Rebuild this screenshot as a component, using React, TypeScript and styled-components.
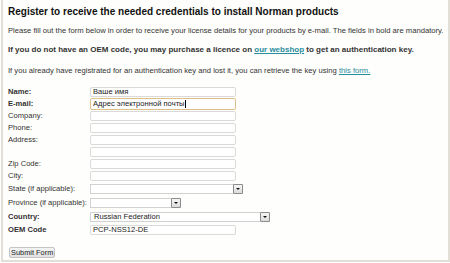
import React from "react";
import styled, { createGlobalStyle } from "styled-components";

const Global = createGlobalStyle`
  html, body { margin: 0; padding: 0; background: #ffffff; }
  body { font-family: "Liberation Sans", Arial, sans-serif; color: #222; }
  * { box-sizing: border-box; }
`;

const Frame = styled.div`
  width: 449px;
  height: 262px;
  margin-left: 1px;
  border: 2px solid #e1dfd6;
  border-top: none;
  background: #fefefc;
  padding: 5px 0 0 5px;
  overflow: hidden;
`;

const Title = styled.h1`
  margin: 0;
  font-size: 10px;
  line-height: 14px;
  font-weight: bold;
  color: #111;
`;

const Para = styled.p<{ $bold?: boolean; $mt: number }>`
  margin: ${(p) => p.$mt}px 0 0 0;
  font-size: ${(p) => (p.$bold ? 8 : 7.65)}px;
  line-height: 10px;
  font-weight: ${(p) => (p.$bold ? "bold" : "normal")};
  color: #333;
  white-space: nowrap;
`;

const Link = styled.a`
  color: #2a8c9c;
  text-decoration: underline;
`;

const Form = styled.div`
  margin-top: 11px;
  display: grid;
  grid-template-columns: 82px auto;
  row-gap: 2px;
  align-items: center;
`;

const Label = styled.div<{ $bold?: boolean }>`
  font-size: 7.6px;
  line-height: 10px;
  font-weight: ${(p) => (p.$bold ? "bold" : "normal")};
  color: #333;
  white-space: nowrap;
`;

const TextBox = styled.div<{ $focus?: boolean }>`
  width: 146px;
  height: ${(p) => (p.$focus ? 12 : 10)}px;
  border: 1px solid ${(p) => (p.$focus ? "#dcc088" : "#dadada")};
  border-radius: 2px;
  background: #fff;
  font-size: 7.6px;
  line-height: ${(p) => (p.$focus ? 10 : 8)}px;
  padding-left: 2px;
  color: #222;
  white-space: nowrap;
  margin: ${(p) => (p.$focus ? "-1px 0" : "0")};
`;

const Caret = styled.span`
  display: inline-block;
  width: 1px;
  height: 8px;
  background: #000;
  vertical-align: middle;
`;

const SelectRow = styled.div`
  height: 12px;
  display: flex;
  align-items: center;
`;

const Select = styled.div<{ $w: number }>`
  width: ${(p) => p.$w}px;
  height: 10px;
  border: 1px solid #d2d2d2;
  background: #fff;
  display: flex;
  align-items: center;
  justify-content: space-between;
  font-size: 7.6px;
  line-height: 8px;
  color: #222;
  padding-left: 3px;
`;

const Arrow = styled.div`
  width: 10px;
  height: 10px;
  margin-right: -1px;
  border: 1px solid #8c8c8c;
  border-radius: 1px;
  background: linear-gradient(#f6f6f6, #dcdcdc);
  display: flex;
  align-items: center;
  justify-content: center;
  &::after {
    content: "";
    border-left: 2px solid transparent;
    border-right: 2px solid transparent;
    border-top: 2px solid #111;
  }
`;

const Button = styled.button`
  margin-top: 12px;
  margin-left: 1px;
  height: 11px;
  padding: 0 1px;
  font-family: "Liberation Sans", Arial, sans-serif;
  font-size: 7.4px;
  line-height: 9px;
  color: #222;
  border: 1px solid #c4c4c4;
  border-radius: 2px;
  background: linear-gradient(#f4f4f4, #e2e2e2);
  display: block;
`;

const rows: { label: string; bold?: boolean; value?: string; focus?: boolean }[] = [
  { label: "Name:", bold: true, value: "Ваше имя" },
  { label: "E-mail:", bold: true, value: "Адрес электронной почты", focus: true },
  { label: "Company:" },
  { label: "Phone:" },
  { label: "Address:" },
  { label: "" },
  { label: "Zip Code:" },
  { label: "City:" },
];

const selects: { label: string; bold?: boolean; w: number; value?: string }[] = [
  { label: "State (if applicable):", w: 153 },
  { label: "Province (if applicable):", w: 91 },
  { label: "Country:", bold: true, w: 180, value: "Russian Federation" },
];

export default function App() {
  return (
    <>
      <Global />
      <Frame>
        <Title>Register to receive the needed credentials to install Norman products</Title>
        <Para $mt={7}>
          Please fill out the form below in order to receive your license details for your products by e-mail. The fields in bold are mandatory.
        </Para>
        <Para $mt={9} $bold>
          If you do not have an OEM code, you may purchase a licence on <Link href="#">our webshop</Link> to get an authentication key.
        </Para>
        <Para $mt={11}>
          If you already have registrated for an authentication key and lost it, you can retrieve the key using <Link href="#">this form.</Link>
        </Para>
        <Form>
          {rows.map((r, i) => (
            <React.Fragment key={i}>
              <Label $bold={r.bold}>{r.label}</Label>
              <TextBox $focus={r.focus}>
                {r.value}
                {r.focus && <Caret />}
              </TextBox>
            </React.Fragment>
          ))}
          {selects.map((s, i) => (
            <React.Fragment key={"s" + i}>
              <Label $bold={s.bold}>{s.label}</Label>
              <SelectRow>
                <Select $w={s.w}>
                  <span>{s.value}</span>
                  <Arrow />
                </Select>
              </SelectRow>
            </React.Fragment>
          ))}
          <Label $bold>OEM Code</Label>
          <TextBox>PCP-NSS12-DE</TextBox>
        </Form>
        <Button>Submit Form</Button>
      </Frame>
    </>
  );
}
